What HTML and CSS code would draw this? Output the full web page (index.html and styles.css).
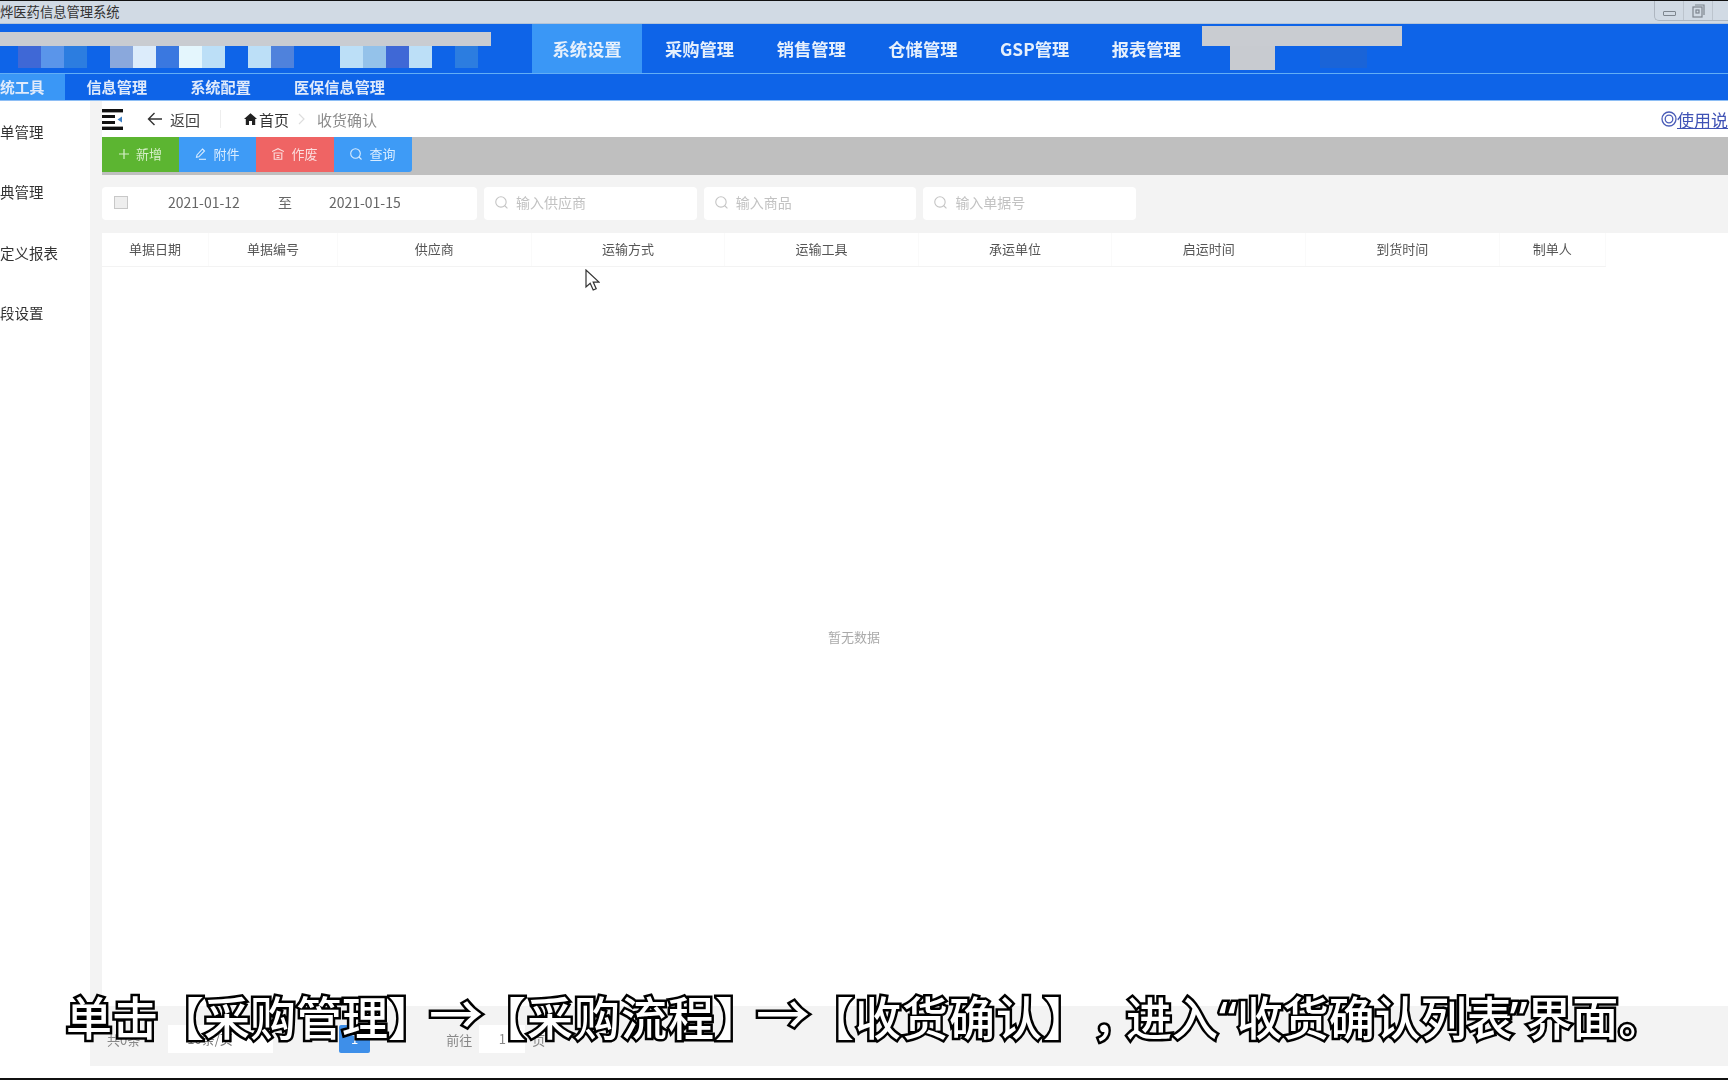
FILE: index.html
```html
<!DOCTYPE html>
<html lang="zh-CN">
<head>
    <meta charset="UTF-8">
    <title>收货确认</title>
    <link rel="stylesheet" href="styles.css">
</head>
<body>

<div class="app">
    <div class="titlebar">
        <span class="app-name">烨医药信息管理系统</span>
        <div class="win-controls">
            <span class="win-btn"><i class="win-min"></i></span>
            <span class="win-btn">
                <svg width="13" height="14" viewBox="0 0 13 14" fill="none" stroke="#7d858e" stroke-width="1.2"><path d="M3 1h9v10"/><rect x="1" y="3" width="9" height="10"/><rect x="4" y="6" width="3" height="3"/></svg>
            </span>
            <span class="win-btn"></span>
        </div>
    </div>

    <div class="topnav">
        <div class="brand">
            <div class="brand-bar"></div>
            <div class="mosaic">
                <i class="m m3"></i><i class="m m5"></i><i class="m m2"></i><i class="m"></i>
                <i class="m m6"></i><i class="m m8"></i><i class="m m1"></i><i class="m m9"></i><i class="m m7"></i><i class="m"></i>
                <i class="m m7"></i><i class="m m4"></i><i class="m"></i><i class="m"></i>
                <i class="m m7"></i><i class="m m5b"></i><i class="m m3"></i><i class="m m7"></i><i class="m"></i>
                <i class="m m2"></i>
            </div>
        </div>
        <a class="tab active">系统设置</a>
        <a class="tab">采购管理</a>
        <a class="tab">销售管理</a>
        <a class="tab">仓储管理</a>
        <a class="tab">GSP管理</a>
        <a class="tab">报表管理</a>
        <div class="user-mask">
            <div class="mask-bar"></div>
            <div class="mask-lower">
                <div class="mask-block"></div>
                <div class="mask-blur"></div>
            </div>
        </div>
    </div>

    <div class="subnav">
        <a class="sub-item active first">统工具</a>
        <a class="sub-item">信息管理</a>
        <a class="sub-item">系统配置</a>
        <a class="sub-item">医保信息管理</a>
    </div>

    <div class="main">
        <div class="sidebar">
            <div class="side-item">单管理</div>
            <div class="side-item">典管理</div>
            <div class="side-item">定义报表</div>
            <div class="side-item">段设置</div>
        </div>

        <div class="content">
            <div class="crumbs">
                <svg class="menu-icon" width="21" height="21" viewBox="0 0 21 21"><rect width="21" height="3.4" fill="#111"/><rect y="6" width="13" height="3" fill="#111"/><rect y="12" width="13" height="3" fill="#111"/><rect y="17.6" width="21" height="3.4" fill="#111"/><path d="M20 7.5v6l-4.5-3z" fill="#3d7fc4"/></svg>
                <svg class="back-icon" width="15" height="14" viewBox="0 0 15 14" fill="none" stroke="#333" stroke-width="1.4"><path d="M15 7H1.5M7.5 1 1.5 7l6 6"/></svg>
                <span class="back-text">返回</span>
                <span class="crumb-line"></span>
                <svg class="home-icon" width="13" height="12" viewBox="0 0 13 12"><path d="M6.500.3 13 6h-1.800v6H8V8H5v4H1.800V6H0z" fill="#222"/></svg>
                <span class="crumb-home">首页</span>
                <svg class="crumb-sep" width="7" height="12" viewBox="0 0 7 12" fill="none" stroke="#ddd" stroke-width="1.200"><path d="m1 1 5 5-5 5"/></svg>
                <span class="crumb-now">收货确认</span>
                <a class="help-link"><svg width="16" height="16" viewBox="0 0 16 16" fill="none" stroke="#4a5cb8" stroke-width="1.300"><circle cx="8" cy="8" r="7"/><circle cx="8" cy="8" r="3.800"/></svg><span>使用说</span></a>
            </div>

            <div class="toolbar">
                <button class="btn green">
                    <svg width="10" height="10" viewBox="0 0 10 10" stroke="#d6efc8" stroke-width="1.200"><path d="M5 0v10M0 5h10"/></svg>新增
                </button>
                <button class="btn blue">
                    <svg width="11" height="12" viewBox="0 0 11 12" fill="none" stroke="#d8ecff" stroke-width="1.100"><path d="M7.500 1 9.500 3 3.800 8.800 1.500 9.300 2 7z"/><path d="M4 11.300h7"/></svg>附件
                </button>
                <button class="btn red wide">
                    <svg width="12" height="12" viewBox="0 0 12 12" fill="none" stroke="#fbdcdc" stroke-width="1.100"><path d="M0 3.500 6 .7l6 2.800M1.500 5h9M2.200 5v6.300h7.600V5M4.500 7.500h3M4.500 9.500h3"/></svg>作废
                </button>
                <button class="btn blue wide">
                    <svg width="12" height="12" viewBox="0 0 12 12" fill="none" stroke="#d8ecff" stroke-width="1.100"><circle cx="5.500" cy="5.500" r="4.800"/><path d="m9 9 2.500 2.500"/></svg>查询
                </button>
            </div>

            <div class="filters">
                <div class="date-box">
                    <i class="check"></i>
                    <span class="date-a">2021-01-12</span>
                    <span class="date-to">至</span>
                    <span class="date-b">2021-01-15</span>
                </div>
                <div class="search-box">
                    <svg width="13" height="13" viewBox="0 0 12 12" fill="none" stroke="#c4c4c4" stroke-width="1"><circle cx="5.500" cy="5.500" r="4.800"/><path d="m9 9 2.500 2.500"/></svg>
                    <span>输入供应商</span>
                </div>
                <div class="search-box">
                    <svg width="13" height="13" viewBox="0 0 12 12" fill="none" stroke="#c4c4c4" stroke-width="1"><circle cx="5.500" cy="5.500" r="4.800"/><path d="m9 9 2.500 2.500"/></svg>
                    <span>输入商品</span>
                </div>
                <div class="search-box">
                    <svg width="13" height="13" viewBox="0 0 12 12" fill="none" stroke="#c4c4c4" stroke-width="1"><circle cx="5.500" cy="5.500" r="4.800"/><path d="m9 9 2.500 2.500"/></svg>
                    <span>输入单据号</span>
                </div>
            </div>

            <div class="table-panel">
                <div class="table-head">
                    <div>单据日期</div>
                    <div>单据编号</div>
                    <div>供应商</div>
                    <div>运输方式</div>
                    <div>运输工具</div>
                    <div>承运单位</div>
                    <div>启运时间</div>
                    <div>到货时间</div>
                    <div>制单人</div>
                </div>
                <div class="table-empty">暂无数据</div>
            </div>

            <div class="pager">
                <span class="pager-total">共0条</span>
                <span class="pager-size">10条/页</span>
                <span class="pager-num">1</span>
                <span class="pager-goto">前往</span>
                <span class="pager-input">1</span>
                <span class="pager-unit">页</span>
            </div>
            <div class="bottom-strip"></div>
        </div>
    </div>
</div>

<svg class="cursor" width="15" height="22" viewBox="0 0 15 22"><path d="M1 1v17l4.200-3.800 3 6.800 3-1.300-3-6.600H14z" fill="#fff" stroke="#333" stroke-width="1.200"/></svg>

<div class="subtitle">单击【采购管理】<span class="arrow a1">→</span><span class="seg after-a1">【采购流程】</span><span class="arrow a2">→</span><span class="seg after-a2">【收货确认】</span><span class="comma">，</span><span class="after-comma">进入</span><span class="quote q1">“</span>收货确认列表<span class="quote q2">”</span>界面。</div>

</body>
</html>
```

FILE: styles.css
```css
* {
    box-sizing: border-box;
}

body {
    margin: 0;
    height: 1080px;
    overflow: hidden;
    position: relative;
    background: #fff;
    color: #333;
    font-family: "Noto Sans CJK SC", "Noto Sans", sans-serif;
}

.app {
    height: 1080px;
    display: flex;
    flex-direction: column;
    border-top: 1px solid #111;
    border-bottom: 2px solid #111;
    filter: blur(0.4px);
}

/* window title */
.titlebar {
    height: 23px;
    flex: none;
    display: flex;
    justify-content: space-between;
    background: #d1dae4;
    border-bottom: 1px solid #b4c4d8;
}

.app-name {
    font-size: 13.300px;
    line-height: 22px;
    color: #333;
}

.win-controls {
    display: flex;
    height: 20px;
    width: 74px;
    overflow: hidden;
    border: 1px solid #aeb6c0;
    border-top: 0;
    border-right: 0;
    border-radius: 0 0 0 5px;
}

.win-btn {
    width: 29px;
    flex: none;
    display: flex;
    align-items: center;
    justify-content: center;
    border-right: 1px solid #bcc4cd;
}

.win-min {
    width: 13px;
    height: 5px;
    margin-top: 5px;
    border: 1px solid #7d858e;
    border-radius: 1px;
}

/* top nav */
.topnav {
    height: 50px;
    flex: none;
    display: flex;
    background: #0e64e8;
    border-bottom: 1px solid #62aef5;
}

.brand {
    width: 532px;
    padding-top: 8px;
}

.brand-bar {
    width: 491px;
    height: 14px;
    background: #c9ccd1;
}

.mosaic {
    display: flex;
    height: 22px;
    padding-left: 18px;
}

.m { width: 23px; flex: none; }
.m1 { background: #3a78e0; }
.m2 { background: #2c7de0; }
.m3 { background: #3f68d6; }
.m4 { background: #4f82dc; }
.m5 { background: #5a95ea; }
.m5b { background: #94c2ea; }
.m6 { background: #8aa8dc; }
.m7 { background: #bcdff7; }
.m8 { background: #dcecfb; }
.m9 { background: #e4f6fd; }

.tab {
    width: 111.700px;
    text-align: center;
    color: #e6f0fc;
    font-size: 17.300px;
    font-weight: 700;
    line-height: 49px;
}

.tab.active {
    width: 110px;
    margin-right: 1.700px;
    background: #3a97f6;
}

.user-mask {
    width: 200px;
    padding-top: 2px;
}

.mask-bar {
    height: 20px;
    background: #c9ccd1;
}

.mask-lower {
    display: flex;
    padding-left: 28px;
}

.mask-block {
    width: 45px;
    height: 24px;
    background: #c8cbd0;
}

.mask-blur {
    width: 47px;
    height: 20px;
    margin: 2px 0 0 45px;
    background: #1a64d8;
}

/* second nav */
.subnav {
    height: 27px;
    flex: none;
    display: flex;
    background: #0e64e8;
    border-bottom: 1px solid #8ebef5;
}

.sub-item {
    padding: 0 21.500px;
    color: #dfeafb;
    font-size: 15.200px;
    font-weight: 700;
    line-height: 25px;
}

.sub-item.active {
    background: #3a97f6;
}

.sub-item.first {
    padding: 0 20.500px 0 0;
    font-size: 14.800px;
}

.main {
    flex: 1;
    display: flex;
    min-height: 0;
}

.sidebar {
    width: 90px;
    flex: none;
    background: #fff;
}

.side-item {
    height: 60.400px;
    font-size: 14.500px;
    line-height: 62px;
    color: #333;
}

.content {
    flex: 1;
    display: flex;
    flex-direction: column;
    background: #f3f3f3;
    min-width: 0;
}

/* breadcrumb row */
.crumbs {
    height: 36px;
    flex: none;
    margin-left: 12px;
    display: flex;
    align-items: center;
    background: #fff;
    font-size: 15px;
}

.back-icon { margin-left: 24px; }

.back-text {
    margin-left: 8px;
    color: #444;
}

.crumb-line {
    width: 1px;
    height: 18px;
    margin-left: 20px;
    background: #eee;
}

.home-icon { margin-left: 23px; }

.crumb-home {
    margin-left: 2px;
    color: #333;
}

.crumb-sep { margin-left: 9px; }

.crumb-now {
    margin-left: 12px;
    color: #8c8c8c;
}

.help-link {
    margin-left: auto;
    display: flex;
    align-items: center;
    color: #3f52b5;
    font-size: 17px;
    text-decoration: underline;
}

.help-link svg { flex: none; }

/* action buttons */
.toolbar {
    height: 38px;
    flex: none;
    margin-left: 12px;
    display: flex;
    background: #bfbfbf;
}

.btn {
    height: 35px;
    width: 77px;
    display: flex;
    align-items: center;
    justify-content: center;
    gap: 7px;
    padding: 0 0 2px;
    border: 0;
    font-family: inherit;
    font-size: 13px;
}

.btn.wide { width: 78px; }
.btn.green { background: #5cb531; color: #d6efc8; }
.btn.blue { background: #3e9bf6; color: #d8ecff; }
.btn.red { background: #ef6464; color: #fbdcdc; }
.btn:last-child { border-radius: 0 0 3px 0; }

/* filters */
.filters {
    height: 58px;
    flex: none;
    margin-left: 12px;
    padding-top: 12px;
    display: flex;
    gap: 7px;
}

.date-box,
.search-box {
    height: 33px;
    display: flex;
    align-items: center;
    padding-bottom: 3px;
    background: #fff;
    border-radius: 4px;
}

.date-box {
    width: 375px;
    font-size: 14px;
    color: #666;
}

.check {
    width: 14px;
    height: 13px;
    margin-left: 12px;
    border: 1px solid #c8c8c8;
    background: #eee;
}

.date-a { margin-left: 40px; }
.date-to { margin-left: 38px; }
.date-b { margin-left: 37px; }

.search-box {
    width: 212.700px;
    padding-left: 11px;
    gap: 8px;
    font-size: 14px;
    color: #c2c2c2;
}

/* table */
.table-panel {
    flex: 1;
    margin-left: 12px;
    display: flex;
    flex-direction: column;
    background: #fff;
}

.table-head {
    height: 34px;
    flex: none;
    width: 1504px;
    display: grid;
    grid-template-columns: 107px 129px repeat(6, 193.600px) 106.400px;
    border-bottom: 1px solid #f3f3f3;
    border-right: 1px solid #f5f5f5;
    font-size: 13px;
    color: #555;
}

.table-head div {
    text-align: center;
    line-height: 31px;
    border-right: 1px solid #fafafa;
}

.table-empty {
    margin: 361px 0 0 726px;
    font-size: 13px;
    line-height: 18px;
    color: #aaa;
}

/* pager */
.pager {
    height: 60px;
    flex: none;
    display: flex;
    align-items: center;
    padding-left: 17px;
    padding-top: 6px;
    font-size: 13px;
    color: #888;
}

.pager-size {
    width: 105px;
    height: 28px;
    margin-left: 28px;
    padding-left: 19px;
    background: #fff;
    line-height: 28px;
    color: #777;
}

.pager-num {
    width: 31px;
    height: 28px;
    margin-left: 66px;
    background: #3e8fe9;
    color: #fff;
    text-align: center;
    line-height: 28px;
    border-radius: 2px;
}

.pager-goto { margin-left: 76px; }

.pager-input {
    width: 46px;
    height: 28px;
    margin-left: 7px;
    background: #fff;
    text-align: center;
    line-height: 28px;
}

.pager-unit { margin-left: 7px; }

.bottom-strip {
    height: 12px;
    flex: none;
    background: #fff;
}

/* overlays on the video frame */
.cursor {
    position: absolute;
    left: 585px;
    top: 269px;
}

.subtitle {
    position: absolute;
    left: 66px;
    top: 983px;
    font-size: 46px;
    font-weight: 500;
    line-height: 64px;
    white-space: nowrap;
    color: #fff;
    -webkit-text-stroke: 5px #000;
    paint-order: stroke fill;
}

.arrow {
    font-size: 54px;
    line-height: 0;
}

.seg { letter-spacing: 1px; }
.a1 { margin-left: -5px; }
.after-a1 { margin-left: -3px; }
.a2 { margin-left: -6px; }
.after-a2 { margin-left: -2px; }
.comma { margin-left: 25px; }
.after-comma { margin-left: -12px; }

.quote {
    font-family: "Noto Sans", sans-serif;
}

.q1 { margin-left: 1px; }
.q2 { margin-left: -3px; margin-right: -1px; }
```
